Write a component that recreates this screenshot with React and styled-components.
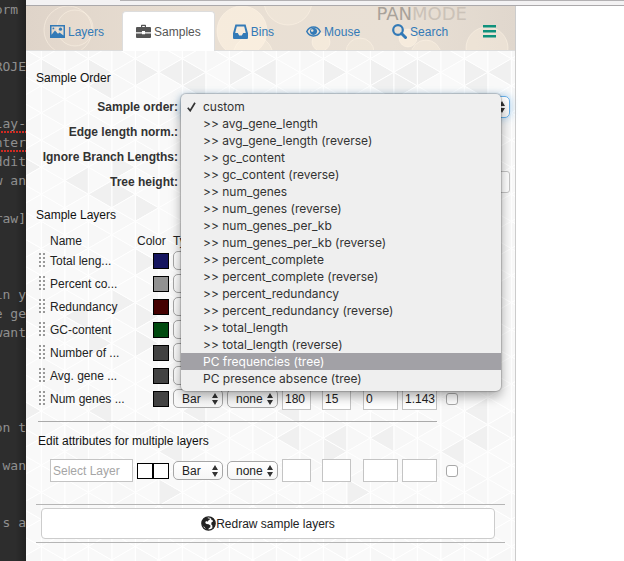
import React from "react";
import styled, { createGlobalStyle, css } from "styled-components";

const sans = '"Liberation Sans", Arial, sans-serif';
const blue = "#337ab7";

const GlobalStyle = createGlobalStyle`
  *, *::before, *::after { box-sizing: border-box; }
  body {
    margin: 0;
    background: #fff;
    color: #222;
    font: 12px/16px ${sans};
  }
  input, select, button { font: inherit; color: inherit; margin: 0; }
`;

/* ---------- page frame ---------- */

const Page = styled.div`
  display: grid;
  grid-template-columns: 26px minmax(0, 1fr);
  min-height: 100vh;
`;

const Editor = styled.pre`
  margin: 0;
  overflow: hidden;
  display: flex;
  flex-direction: column;
  align-items: flex-end;
  background: linear-gradient(to right, #2d2d2d 60%, #222);
  color: #8f8f8f;
  font: 13px/19px "DejaVu Sans Mono", monospace;
`;

const CodeLine = styled.span`
  flex: none;
  height: 19px;
  ${(p) =>
    p.$misspelled &&
    css`
      background: radial-gradient(circle at 1px 1px, #d02a22 1px, transparent 1px) left bottom / 3px 2px repeat-x;
    `}
`;

const Browser = styled.div`
  display: flex;
  flex-direction: column;
  min-width: 0;
`;

const Chrome = styled.div`
  height: 6px;
  flex: none;
  background: #f3f2f3;
  border-bottom: 1px solid #aba9ab;

  &::before {
    content: "";
    display: block;
    height: 1px;
    margin-left: 94px;
    background: #b3b1b3;
  }
`;

const Viewport = styled.div`
  flex: 1;
  display: grid;
  grid-template-columns: minmax(0, 1fr) 108px;
`;

const Panel = styled.aside`
  display: flex;
  flex-direction: column;
  border-right: 1px solid #ccc;
`;

/* ---------- tabs ---------- */

const TabBar = styled.nav`
  position: relative;
  display: flex;
  gap: 4px;
  height: 45px;
  padding: 5px 10px 0;
  background: linear-gradient(to right, #dfd4c9, #e9dfd3 35%, #e9e0d5 75%, #e0d7cd);
  border-bottom: 1px solid #ddd;
`;

const Backdrop = styled.svg`
  position: absolute;
  inset: 0;
  width: 100%;
  height: 100%;
  pointer-events: none;
`;

const Brand = styled.span`
  position: absolute;
  top: 0;
  right: 48px;
  color: #cbc2b8;
  font: 18px/16px "DejaVu Sans", sans-serif;

  b {
    font-weight: 400;
    color: #a8a29a;
  }
`;

const Tab = styled.a`
  position: relative;
  display: flex;
  align-items: center;
  gap: 3px;
  height: 40px;
  padding: 0 13px;
  border: 1px solid transparent;
  border-bottom: 0;
  border-radius: 4px 4px 0 0;
  color: ${blue};
  text-decoration: none;

  ${(p) =>
    p.$active &&
    css`
      background: #fff;
      border-color: #ddd;
      color: #555;
    `}
`;

const MenuButton = styled(Tab).attrs({ as: "button", type: "button" })`
  background: none;
  padding: 0 15px;
  color: #0f917c;
`;

const Icon = styled.svg.attrs({ "aria-hidden": true })`
  width: 15px;
  height: 15px;
  flex: none;
  fill: currentColor;
`;

/* ---------- panel body ---------- */

const Body = styled.main`
  position: relative;
  flex: 1;
  padding: 19px 10px 18px;
  background: #fafafa;
`;

const Content = styled.div`
  position: relative;
`;

const Heading = styled.h2`
  margin: ${(p) => p.$top || 0}px 0 10px ${(p) => p.$indent || 0}px;
  font-size: 12px;
  line-height: 16px;
  font-weight: 400;
  color: #111;
`;

const Form = styled.form`
  display: grid;
  grid-template-columns: 142px minmax(0, 1fr);
  column-gap: 3px;
  grid-auto-rows: 22px;
  row-gap: 3px;
  align-items: center;
  margin-right: -5px;
`;

const Label = styled.label`
  text-align: right;
  font-weight: 700;
  color: #333;
`;

const Field = styled.div`
  position: relative;
  display: flex;
  align-items: center;
  height: 22px;
`;

const arrows = `url("data:image/svg+xml,%3Csvg xmlns='http://www.w3.org/2000/svg' width='6' height='12'%3E%3Cpath d='M3 0l3 5H0zM3 12l3-5H0z' fill='%23333'/%3E%3C/svg%3E")`;

const Select = styled.select`
  appearance: none;
  width: 100%;
  height: ${(p) => (p.$large ? 22 : 19)}px;
  padding: 0 8px;
  border: 1px solid #a6a6a6;
  border-radius: 5px;
  background: ${arrows} right 4px center no-repeat, linear-gradient(#fff, #f6f6f6);
  outline: 0;
  display: block;

  ${(p) =>
    p.$focused &&
    css`
      border-color: #66afe9;
      box-shadow: 0 0 8px rgba(102, 175, 233, 0.6);
    `}
`;

const TextBox = styled.input`
  width: 100%;
  height: ${(p) => (p.$large ? 22 : 23)}px;
  padding: 0 0 0 2px;
  border: 1px solid #c4c4c4;
  border-radius: ${(p) => (p.$large ? 3 : 0)}px;
  background: #fff;
  outline: 0;
  display: block;

  &::placeholder {
    color: #a5a5a5;
  }
`;

const Check = styled.input.attrs({ type: "checkbox" })`
  appearance: none;
  display: block;
  width: 12px;
  height: 12px;
  border: 1px solid #a8a8a8;
  border-radius: 3px;
  background: #fff;
`;

const Menu = styled.ul`
  position: absolute;
  z-index: 5;
  top: -2px;
  left: 0;
  right: 9px;
  margin: 0;
  padding: 4px 0;
  list-style: none;
  border-radius: 5px;
  background: #efefef;
  box-shadow: 0 0 1px 1px rgba(0, 0, 0, 0.18), 0 5px 12px rgba(0, 0, 0, 0.35);
  color: #333;
  font: 12px/17px Inter, sans-serif;
`;

const MenuItem = styled.li`
  display: flex;
  align-items: center;
  height: 17px;
  white-space: nowrap;
  ${(p) =>
    p.$active &&
    css`
      background: #a2a1a6;
      color: #fff;
    `}
`;

const MenuMark = styled.span`
  width: 22px;
  flex: none;
  padding-left: 6px;
  display: flex;
`;

/* ---------- layer tables ---------- */

const Table = styled.table`
  width: 100%;
  padding-left: 2px;
  table-layout: fixed;
  border-collapse: separate;
  border-spacing: 0;

  th {
    height: 16px;
    padding: 0;
    font-weight: 400;
    text-align: left;
    white-space: nowrap;
  }
`;

const Cell = styled.td`
  height: 23px;
  padding: 0 ${(p) => p.$gap || 0}px 0 0;
  vertical-align: middle;
`;

const Grip = styled.span`
  display: block;
  width: 7px;
  height: 16px;
  margin-left: 1px;
  background: radial-gradient(circle at 1px 1px, #999 1px, transparent 1px) 0 0 / 4px 4px;
`;

const Swatches = styled.span`
  display: flex;
  justify-content: flex-end;
`;

const Swatch = styled.input.attrs({ type: "color" })`
  appearance: none;
  width: 16px;
  height: 16px;
  padding: 0;
  border: 1px solid #000;
  background: none;

  &::-webkit-color-swatch-wrapper {
    padding: 0;
  }
  &::-webkit-color-swatch {
    border: 0;
    border-radius: 0;
  }
`;

const Rule = styled.hr`
  max-width: 399px;
  height: 1px;
  margin: 11px 0 0 2px;
  border: 0;
  background: #aaa;
`;

const Actions = styled.div`
  margin-top: 22px;
  padding: 3px 10px 3px 5px;
  border: solid #b5b5b5;
  border-width: 1px 0;
`;

const RedrawButton = styled.button`
  display: flex;
  align-items: center;
  justify-content: center;
  width: 100%;
  height: 31px;
  padding: 0;
  border: 1px solid #ccc;
  border-radius: 4px;
  background: #fff;
  color: #222;
`;

/* ---------- drawings ---------- */

const PictureIcon = () => (
  <Icon viewBox="0 0 15 15">
    <path fillRule="evenodd" d="M0 1h15v13H0zM1.5 2.5v8.2L5 6.5l3 3.3 1.5-1.3 4 3V2.5z" />
    <circle cx="10.5" cy="5.2" r="1.6" />
    <circle cx="3.4" cy="4.4" r=".9" />
  </Icon>
);

const BriefcaseIcon = () => (
  <Icon viewBox="0 0 15 15">
    <path fillRule="evenodd" d="M5 3V1.6Q5 .8 5.8.8h3.4q.8 0 .8.8V3h4q1 0 1 1v4.2H9V7H6v1.2H0V4q0-1 1-1zM6.2 3h2.6V2H6.2zM0 9.5h6v.8h3v-.8h6V13q0 1-1 1H1q-1 0-1-1z" />
  </Icon>
);

const InboxIcon = () => (
  <Icon viewBox="0 0 15 15">
    <path fillRule="evenodd" d="M2.4.5h10.2L15 9.2V14q0 1-1 1H1q-1 0-1-1V9.2zM3.8 2.5L2.2 9h2.6l1.4 2.6h2.6L10.2 9h2.6l-1.6-6.5z" />
  </Icon>
);

const EyeIcon = () => (
  <Icon viewBox="0 0 15 15">
    <path d="M.8 7.500C2.200 4.600 4.600 3 7.500 3s5.300 1.600 6.700 4.500C12.800 10.400 10.400 12 7.500 12S2.200 10.400.8 7.500z" fill="none" stroke="currentColor" strokeWidth="1.500" />
    <path fillRule="evenodd" d="M7.500 3.800a3.600 3.600 0 1 0 .01 0zM6.200 5.200a1.300 1.300 0 1 1-.01 0z" />
  </Icon>
);

const SearchIcon = () => (
  <Icon viewBox="0 0 15 15">
    <circle cx="6" cy="6" r="4.800" fill="none" stroke="currentColor" strokeWidth="2.200" />
    <path d="M9.500 9.500l4 4" stroke="currentColor" strokeWidth="3" strokeLinecap="round" />
  </Icon>
);

const HamburgerIcon = () => (
  <Icon viewBox="0 0 15 15">
    <path d="M1 1h13v2.500H1zM1 6h13v2.500H1zM1 11h13v2.500H1z" />
  </Icon>
);

const GlobeIcon = () => (
  <Icon viewBox="0 0 15 15">
    <circle cx="7.500" cy="7.500" r="6.700" fill="#fff" stroke="currentColor" strokeWidth="1.200" />
    <path d="M6.200.9C3 1.400.9 4 .9 7.200c0 1.200.3 2.300.8 3.200l1.500.4 1.300 1.700 1 .9 1.900.8.2-1.800 1.700-1.200.2-1.600-1.900-1.300-2-.2-1.300-1.200.3-1.500 1.500-.3.600.9.600-1.500 1.600-1.100-.5-1.200-1.400.3z" />
    <path d="M8.600 1l3 1.100 2 2.400.7 3-.5 2.600-1.500 2.200-.9-.4-.1-2.300-1.100-1.400.4-1.900 1.400-.8-.3-1.200-1.400-.3.100-1.200-1-.6z" />
  </Icon>
);

const CheckIcon = () => (
  <svg width="9" height="10" viewBox="0 0 9 10" aria-hidden="true">
    <path d="M.8 5.800L3.200 8.700 8 .8" fill="none" stroke="#333" strokeWidth="1.700" />
  </svg>
);

const Bokeh = () => (
  <Backdrop aria-hidden="true">
    <g fill="#fff3e2" fillOpacity=".35" stroke="#fff5e8" strokeOpacity=".5">
      <circle cx="49" cy="22" r="18" fillOpacity=".12" />
      <circle cx="42" cy="24" r="24" fillOpacity=".08" />
      <circle cx="216" cy="25" r="25" fillOpacity=".6" />
      <circle cx="262" cy="-5" r="24" fillOpacity=".25" />
      <circle cx="227" cy="50" r="20" />
      <circle cx="295" cy="36" r="9" fillOpacity=".5" />
      <circle cx="382" cy="32" r="9" fillOpacity=".6" />
      <circle cx="400" cy="49" r="15" />
      <circle cx="461" cy="42" r="21" />
      <circle cx="334" cy="46" r="14" fillOpacity=".2" />
    </g>
  </Backdrop>
);

/* Triangular mesh: columns STEP apart, nodes SIDE apart, odd columns shifted by half a side. */
const STEP = 23.5;
const SIDE = 27.1;
const shaded = [
  [24, 21], [71, 14], [77, 36], [119, 17], [144, 17], [167, 21], [171, 36], [214, 16], [237, 16],
  [311, 16], [357, 21], [379, 21], [364, 37], [381, 37], [406, 21], [451, 21], [477, 21], [459, 36],
  [71, 142], [122, 152], [99, 119], [51, 127], [97, 142], [6, 117], [121, 206], [71, 289], [96, 247],
  [51, 269], [121, 262], [117, 297], [266, 388], [309, 382], [309, 397], [359, 388], [452, 388],
  [331, 447], [451, 359], [429, 404], [264, 362], [76, 361], [171, 361], [144, 399], [144, 446], [6, 359],
];

const mesh = [];
for (let col = -1; col < 60; col++) {
  const x = 15.3 + col * STEP;
  const shift = col % 2 === 0 ? 7.7 : 21.3;
  for (let row = -2; row < 40; row++) {
    const y = shift + row * SIDE;
    mesh.push([[x, y], [x, y + SIDE], [x + STEP, y + SIDE / 2]]);
    mesh.push([[x, y], [x - STEP, y + SIDE / 2], [x, y + SIDE]]);
  }
}

const contains = ([a, b, c], [px, py]) => {
  const side = (p, q) => (q[0] - p[0]) * (py - p[1]) - (q[1] - p[1]) * (px - p[0]);
  const s = [side(a, b), side(b, c), side(c, a)];
  return s.every((v) => v > 0) || s.every((v) => v < 0);
};

const Mesh = () => (
  <Backdrop aria-hidden="true">
    {mesh.map((t, i) => (
      <polygon
        key={i}
        points={t.map((p) => p.join(",")).join(" ")}
        fill={shaded.some((p) => contains(t, p)) ? "#f0f0f0" : i % 5 === 0 || i % 7 === 2 ? "#f7f7f7" : "#f9f9f9"}
        stroke="#fff"
        strokeWidth="1"
      />
    ))}
  </Backdrop>
);

/* ---------- data ---------- */

const code = {
  0: "orm ", 3: "ROJE", 6: "lay-", 7: "nter", 8: "ddit", 9: "w an", 11: "raw]",
  15: "in y", 16: "e ge", 17: "want", 22: "on t", 24: " wan", 27: "s a",
};

const tabs = [
  ["Layers", PictureIcon],
  ["Samples", BriefcaseIcon],
  ["Bins", InboxIcon],
  ["Mouse", EyeIcon],
  ["Search", SearchIcon],
];

const fields = [
  "avg_gene_length", "gc_content", "num_genes", "num_genes_per_kb",
  "percent_complete", "percent_redundancy", "total_length",
];

const orders = [
  "custom",
  ...fields.flatMap((f) => [`>> ${f}`, `>> ${f} (reverse)`]),
  "PC frequencies (tree)",
  "PC presence absence (tree)",
];

const layers = [
  ["Total leng...", "#14145f"],
  ["Percent co...", "#919191"],
  ["Redundancy", "#440000"],
  ["GC-content", "#004a0f"],
  ["Number of ...", "#424242"],
  ["Avg. gene ...", "#424242"],
  ["Num genes ...", "#424242"],
];

const Columns = () => (
  <colgroup>
    {[12, 87, 36, 54, 55, 40, 41, 39, 44].map((w, i) => (
      <col key={i} width={w} />
    ))}
    <col />
  </colgroup>
);

const LayerRow = ({ id, grip, name, colors, values }) => (
  <tr>
    <Cell>{grip && <Grip />}</Cell>
    <Cell $gap={4}>{name}</Cell>
    <Cell $gap={4}>
      <Swatches>
        {colors.map((c, i) => (
          <Swatch key={i} defaultValue={c} aria-label={`${id} color`} />
        ))}
      </Swatches>
    </Cell>
    <Cell $gap={4}>
      <Select aria-label={`${id} type`}>
        <option>Bar</option>
      </Select>
    </Cell>
    <Cell $gap={4}>
      <Select aria-label={`${id} normalization`}>
        <option>none</option>
      </Select>
    </Cell>
    {["height", "margin", "min", "max"].map((k, i) => (
      <Cell key={k} $gap={[11, 12, 4, 9][i]}>
        <TextBox defaultValue={values[i]} aria-label={`${id} ${k}`} />
      </Cell>
    ))}
    <Cell>
      <Check aria-label={`${id} selected`} />
    </Cell>
  </tr>
);

export default function App() {
  return (
    <>
      <GlobalStyle />
      <Page>
        <Editor>
          {Array.from({ length: 28 }, (_, i) => (
            <CodeLine key={i} $misspelled={i === 6 || i === 7}>
              {code[i] || " "}
            </CodeLine>
          ))}
        </Editor>
        <Browser>
          <Chrome />
          <Viewport>
            <Panel>
              <TabBar>
                <Bokeh />
                <Brand>
                  <b>PAN</b>MODE
                </Brand>
                {tabs.map(([label, Glyph]) => (
                  <Tab key={label} href={`#${label}`} $active={label === "Samples"}>
                    <Glyph />
                    {label}
                  </Tab>
                ))}
                <MenuButton aria-label="More">
                  <HamburgerIcon />
                </MenuButton>
              </TabBar>
              <Body>
                <Mesh />
                <Content>
                  <Heading>Sample Order</Heading>
                  <Form>
                    <Label htmlFor="order">Sample order:</Label>
                    <Field>
                      <Select id="order" $large $focused>
                        <option>custom</option>
                      </Select>
                      <Menu role="listbox" aria-label="Sample order">
                        {orders.map((o, i) => (
                          <MenuItem key={o} role="option" aria-selected={i === 0} $active={i === 15}>
                            <MenuMark>{i === 0 && <CheckIcon />}</MenuMark>
                            {o}
                          </MenuItem>
                        ))}
                      </Menu>
                    </Field>
                    <Label htmlFor="norm">Edge length norm.:</Label>
                    <Field>
                      <Check id="norm" />
                    </Field>
                    <Label htmlFor="ignore">Ignore Branch Lengths:</Label>
                    <Field>
                      <Check id="ignore" />
                    </Field>
                    <Label htmlFor="tree">Tree height:</Label>
                    <Field>
                      <TextBox id="tree" $large />
                    </Field>
                  </Form>
                  <Heading $top={14}>Sample Layers</Heading>
                  <Table>
                    <Columns />
                    <thead>
                      <tr>
                        <th />
                        <th>Name</th>
                        <th>Color</th>
                        <th>Type</th>
                        <th colSpan={6} />
                      </tr>
                    </thead>
                    <tbody>
                      {layers.map(([name, color]) => (
                        <LayerRow
                          key={name}
                          id={name}
                          grip
                          name={name}
                          colors={[color]}
                          values={["180", "15", "0", "1.143"]}
                        />
                      ))}
                    </tbody>
                  </Table>
                  <Rule />
                  <Heading $top={11} $indent={2}>
                    Edit attributes for multiple layers
                  </Heading>
                  <Table>
                    <Columns />
                    <tbody>
                      <LayerRow
                        id="Multiple layers"
                        name={<TextBox placeholder="Select Layer" aria-label="Select Layer" />}
                        colors={["#ffffff", "#ffffff"]}
                        values={["", "", "", ""]}
                      />
                    </tbody>
                  </Table>
                  <Actions>
                    <RedrawButton type="button">
                      <GlobeIcon />
                      Redraw sample layers
                    </RedrawButton>
                  </Actions>
                </Content>
              </Body>
            </Panel>
          </Viewport>
        </Browser>
      </Page>
    </>
  );
}
